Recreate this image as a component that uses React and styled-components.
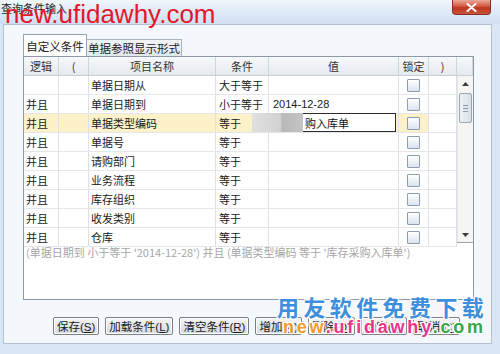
import React from 'react';
import styled, { createGlobalStyle } from 'styled-components';

const GlobalStyle = createGlobalStyle`
    html, body {
        margin: 0;
        padding: 0;
        background: #d9e6f4;
    }
    body {
        font-family: "Noto Sans CJK SC", "Liberation Sans", sans-serif;
    }
`;

const Window = styled.div`
    width: 500px;
    height: 354px;
    position: relative;
    overflow: hidden;
    display: flex;
    flex-direction: column;
    background: #d9e6f4;
`;

const TitleBar = styled.div`
    height: 24px;
    flex: none;
    display: flex;
    align-items: flex-start;
    padding: 0 9px 0 1px;
    background: linear-gradient(#f1f6fc, #e2ecf7 40%, #cfdff1);
    position: relative;
`;

const TitleText = styled.span`
    font-size: 11px;
    line-height: 16px;
    color: #1e1e1e;
`;

const CloseButton = styled.div`
    margin-left: auto;
    width: 39px;
    height: 15px;
    box-sizing: border-box;
    border: 1px solid #8a3026;
    border-top: none;
    border-radius: 0 0 4px 4px;
    background: linear-gradient(#e9a896, #d25a44 45%, #bd3521 55%, #c9553c);
    display: flex;
    align-items: center;
    justify-content: center;
`;

const TopMark = styled.div`
    position: absolute;
    left: 5px;
    top: 1px;
    font-family: "Liberation Sans", Arial, sans-serif;
    font-size: 26px;
    line-height: 1;
    color: #e3162a;
    white-space: nowrap;
    z-index: 5;
`;

const Body = styled.div`
    flex: 1;
    padding: 0 8px 10px 3px;
    display: flex;
`;

const Panel = styled.div`
    flex: 1;
    border: 1px solid #b3c1d1;
    background: #f4f7fb;
    padding: 9px 0 0 19px;
    display: flex;
    flex-direction: column;
`;

const TabRow = styled.div`
    height: 22px;
    display: flex;
    align-items: flex-end;
`;

const Tab = styled.div`
    width: ${p => p.$w}px;
    height: ${p => (p.$active ? 22 : 17)}px;
    box-sizing: border-box;
    border: 1px solid ${p => (p.$active ? '#95a4b6' : '#a9b4c1')};
    border-bottom: none;
    border-left: ${p => (p.$active ? '1px solid #95a4b6' : 'none')};
    background: ${p => (p.$active ? '#ffffff' : 'linear-gradient(#f1f3f6, #e3e8ee)')};
    font-size: 11.5px;
    line-height: ${p => (p.$active ? 22 : 16)}px;
    color: #222;
    text-align: center;
    white-space: nowrap;
`;

const TableFrame = styled.div`
    width: 451px;
    height: 244px;
    box-sizing: border-box;
    border: 1px solid #8d99a6;
    background: #ffffff;
    display: flex;
    flex-direction: column;
`;

const cols = '35px 30px 127px 53px 130px 30px 28px';

const HeaderRow = styled.div`
    height: 19px;
    flex: none;
    display: grid;
    grid-template-columns: ${cols} 1fr;
    background: linear-gradient(#f7f8fa, #e6eaef);
    border-bottom: 1px solid #c9cfd6;
    box-sizing: border-box;
`;

const HeadCell = styled.div`
    border-right: 1px solid #cfd5dc;
    font-size: 11px;
    line-height: 18px;
    color: #333;
    text-align: center;
`;

const GridBody = styled.div`
    height: 166px;
    flex: none;
    display: flex;
`;

const Rows = styled.div`
    width: 433px;
    display: grid;
    grid-template-rows: repeat(9, 1fr);
`;

const Row = styled.div`
    position: relative;
    display: grid;
    grid-template-columns: ${cols};
    background: ${p => (p.$current ? '#fcf1c8' : '#ffffff')};
`;

const Cell = styled.div`
    border-right: 1px solid #dde1e6;
    border-bottom: 1px solid #e3e6ea;
    padding-left: ${p => (p.$pad !== undefined ? p.$pad : 2)}px;
    font-family: ${p => (p.$latin ? '"Liberation Sans", Arial, sans-serif' : 'inherit')};
    font-size: 11px;
    line-height: 18px;
    color: #1a1a1a;
    white-space: nowrap;
    overflow: hidden;
    display: flex;
    align-items: center;
    justify-content: ${p => (p.$center ? 'center' : 'flex-start')};
    background: ${p => (p.$plain ? '#ffffff' : 'transparent')};
`;

const Check = styled.div`
    width: 11px;
    height: 11px;
    border: 1px solid #8e9db1;
    border-radius: 1px;
    background: linear-gradient(#ffffff, #dbe4ef);
`;

const Editor = styled.div`
    position: absolute;
    left: 228px;
    top: -1px;
    width: 144px;
    height: 19px;
    box-sizing: border-box;
    border: 1px solid #2b2b2b;
    background: #ffffff;
    display: flex;
    align-items: center;
    font-size: 11px;
    color: #111;
`;

const Smudge = styled.div`
    width: 51px;
    height: 19px;
    margin: -1px 2px 0 -1px;
    background: linear-gradient(90deg, #e0e0e0, #d2d2d2 55%, #b9b9b9 60%, #c4c4c4);
    filter: blur(0.6px);
`;

const ScrollBar = styled.div`
    width: 16px;
    border-left: 1px solid #e1e4e8;
    background: #f6f5f2;
    display: flex;
    flex-direction: column;
    align-items: center;
    box-sizing: border-box;
`;

const Arrow = styled.div`
    height: 15px;
    display: flex;
    align-items: center;
    justify-content: center;
    margin-top: ${p => (p.$down ? 'auto' : '0')};
`;

const Thumb = styled.div`
    width: 13px;
    height: 30px;
    margin-top: 2px;
    box-sizing: border-box;
    border: 1px solid #98a6b6;
    border-radius: 2px;
    background: linear-gradient(90deg, #eef2f6, #d8dfe7);
    display: flex;
    flex-direction: column;
    align-items: center;
    justify-content: center;
    gap: 2px;
`;

const Grip = styled.div`
    width: 5px;
    height: 1px;
    background: #8b98a6;
`;

const Expression = styled.div`
    flex: 1;
    border-top: 1px solid #9aa4af;
    padding: 1px 2px;
    font-size: 11px;
    line-height: 16px;
    color: #a6a6a6;
    white-space: nowrap;
`;

const ButtonRow = styled.div`
    margin: 17px 0 0 30px;
    display: flex;
    gap: 6px;
`;

const Button = styled.div`
    height: 18px;
    box-sizing: border-box;
    padding: 0 3px;
    border: 1px solid #7a7f86;
    border-radius: 2px;
    background: linear-gradient(#f4f5f7, #e3e6ea 50%, #d6dadf);
    font-size: 11.5px;
    line-height: 16px;
    color: #1a1a1a;
    white-space: nowrap;
    box-shadow: inset 0 0 0 1px #ffffff;
`;

const Key = styled.span`
    font-family: "Liberation Sans", Arial, sans-serif;
    text-decoration: underline;
`;

const Paren = styled.span`
    font-family: "Liberation Sans", Arial, sans-serif;
`;

const outline = `-1px -1px 0 #fff, 1px -1px 0 #fff, -1px 1px 0 #fff, 1px 1px 0 #fff,
    0 -1px 0 #fff, 0 1px 0 #fff, -1px 0 0 #fff, 1px 0 0 #fff, 0 0 3px #ffffff`;

const BlueMark = styled.div`
    position: absolute;
    left: 277px;
    top: 294px;
    font-family: "Noto Sans CJK SC", sans-serif;
    font-weight: 700;
    font-size: 22px;
    line-height: 24px;
    letter-spacing: 4.4px;
    color: #3d8fdc;
    text-shadow: ${outline};
    white-space: nowrap;
    z-index: 5;
`;

const SiteMark = styled.div`
    position: absolute;
    left: 283px;
    top: 318px;
    font-family: "Liberation Sans", Arial, sans-serif;
    font-weight: 700;
    font-size: 18px;
    line-height: 1;
    letter-spacing: 2.8px;
    text-shadow: ${outline};
    white-space: nowrap;
    z-index: 5;
`;

const Part = styled.span`
    color: ${p => p.$c};
`;

const headers = ['逻辑', '(', '项目名称', '条件', '值', '锁定', ')'];

const rows = [
    { logic: '', name: '单据日期从', cond: '大于等于', value: '' },
    { logic: '并且', name: '单据日期到', cond: '小于等于', value: '2014-12-28' },
    { logic: '并且', name: '单据类型编码', cond: '等于', value: '', current: true },
    { logic: '并且', name: '单据号', cond: '等于', value: '' },
    { logic: '并且', name: '请购部门', cond: '等于', value: '' },
    { logic: '并且', name: '业务流程', cond: '等于', value: '' },
    { logic: '并且', name: '库存组织', cond: '等于', value: '' },
    { logic: '并且', name: '收发类别', cond: '等于', value: '' },
    { logic: '并且', name: '仓库', cond: '等于', value: '' },
];

const buttons = [
    ['保存', 'S'],
    ['加载条件', 'L'],
    ['清空条件', 'R'],
    ['增加', 'A'],
    ['删除', 'D'],
    ['确定', 'Y'],
    ['取消', 'C'],
];

export default function App() {
    return (
        <Window>
            <GlobalStyle />
            <TitleBar>
                <TitleText>查询条件输入</TitleText>
                <CloseButton>
                    <svg width="11" height="9" viewBox="0 0 11 9">
                        <path d="M1.5 1 L9.5 8 M9.5 1 L1.5 8" stroke="#ffffff" strokeWidth="2" strokeLinecap="round" />
                    </svg>
                </CloseButton>
                <TopMark>new.ufidawhy.com</TopMark>
            </TitleBar>
            <Body>
                <Panel>
                    <TabRow>
                        <Tab $active $w={64}>自定义条件</Tab>
                        <Tab $w={95}>单据参照显示形式</Tab>
                    </TabRow>
                    <TableFrame>
                        <HeaderRow>
                            {headers.map(h => (
                                <HeadCell key={h}>{h}</HeadCell>
                            ))}
                            <HeadCell />
                        </HeaderRow>
                        <GridBody>
                            <Rows>
                                {rows.map((r, i) => (
                                    <Row key={i} $current={r.current}>
                                        <Cell>{r.logic}</Cell>
                                        <Cell />
                                        <Cell>{r.name}</Cell>
                                        <Cell $pad={3}>{r.cond}</Cell>
                                        <Cell $latin $pad={4}>{r.value}</Cell>
                                        <Cell $center $pad={0}>
                                            <Check />
                                        </Cell>
                                        <Cell $plain={r.current} />
                                        {r.current && (
                                            <Editor>
                                                <Smudge />
                                                购入库单
                                            </Editor>
                                        )}
                                    </Row>
                                ))}
                            </Rows>
                            <ScrollBar>
                                <Arrow>
                                    <svg width="7" height="4" viewBox="0 0 7 4">
                                        <path d="M0 4 L3.5 0 L7 4 Z" fill="#3c3c3c" />
                                    </svg>
                                </Arrow>
                                <Thumb>
                                    <Grip />
                                    <Grip />
                                    <Grip />
                                </Thumb>
                                <Arrow $down>
                                    <svg width="7" height="4" viewBox="0 0 7 4">
                                        <path d="M0 0 L7 0 L3.5 4 Z" fill="#3c3c3c" />
                                    </svg>
                                </Arrow>
                            </ScrollBar>
                        </GridBody>
                        <Expression>
                            (单据日期到 小于等于 '2014-12-28') 并且 (单据类型编码 等于 '库存采购入库单')
                        </Expression>
                    </TableFrame>
                    <ButtonRow>
                        {buttons.map(([label, key]) => (
                            <Button key={key}>
                                {label}
                                <Paren>(</Paren>
                                <Key>{key}</Key>
                                <Paren>)</Paren>
                            </Button>
                        ))}
                    </ButtonRow>
                </Panel>
            </Body>
            <BlueMark>用友软件免费下载</BlueMark>
            <SiteMark>
                <Part $c="#f29a2c">new</Part>
                <Part $c="#e8358c">.ufidawhy</Part>
                <Part $c="#3aa645">.com</Part>
            </SiteMark>
        </Window>
    );
}
